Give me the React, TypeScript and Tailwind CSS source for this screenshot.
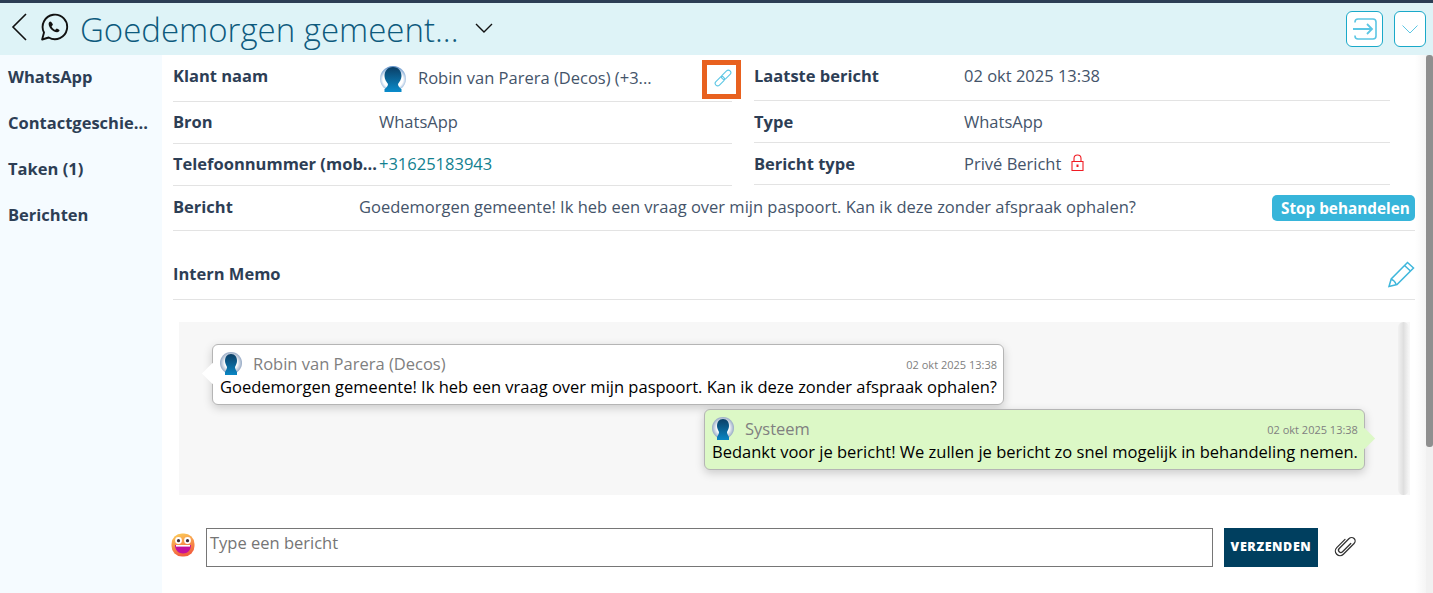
const sideItems = ["WhatsApp", "Contactgeschie...", "Taken (1)", "Berichten"];

function Avatar() {
  return (
    <svg width="26" height="28" viewBox="0 0 26 28" className="mt-[2px] shrink-0">
      <defs>
        <radialGradient id="halo" cx="50%" cy="62%" r="62%">
          <stop offset="62%" stopColor="#ffffff" />
          <stop offset="100%" stopColor="#4f86c4" />
        </radialGradient>
        <linearGradient id="head" x1="0" y1="0" x2="0" y2="1">
          <stop offset="0%" stopColor="#0b3f66" />
          <stop offset="100%" stopColor="#0a8ccc" />
        </linearGradient>
      </defs>
      <path d="M0 14a13 13 0 0 1 26 0c0 4-2 7-4 9H4c-2-2-4-5-4-9z" fill="url(#halo)" />
      <path
        d="M13 2c5.500 0 8.500 4 8.500 9 0 3-2 6-3.500 8 0 2 1 3 3.500 5v3h-17v-3c2.500-2 3.500-3 3.500-5-1.500-2-3.500-5-3.500-8 0-5 3-9 8.500-9z"
        fill="url(#head)"
      />
    </svg>
  );
}

function SmallAvatar() {
  return (
    <svg width="22" height="24" viewBox="0 0 22 24" className="shrink-0">
      <defs>
        <radialGradient id="halo2" cx="50%" cy="50%" r="55%">
          <stop offset="50%" stopColor="#ffffff" />
          <stop offset="100%" stopColor="#7f97b8" />
        </radialGradient>
        <linearGradient id="head2" x1="0" y1="0" x2="0" y2="1">
          <stop offset="0%" stopColor="#0b3f66" />
          <stop offset="100%" stopColor="#0a86c4" />
        </linearGradient>
      </defs>
      <circle cx="11" cy="11" r="11" fill="url(#halo2)" />
      <path d="M11 2c4 0 6 3 6 7 0 2-1 4-2 6 0 2 1 3 2 5v3H5v-3c1-2 2-3 2-5-1-2-2-4-2-6 0-4 2-7 6-7z" fill="url(#head2)" />
    </svg>
  );
}

function Label({ children, className = "" }: { children: React.ReactNode; className?: string }) {
  return <div className={`text-[16.5px] font-bold text-[#2d3e55] ${className}`}>{children}</div>;
}

function Bubble({
  name,
  time,
  text,
  green,
}: {
  name: string;
  time: string;
  text: string;
  green?: boolean;
}) {
  return (
    <div
      className={`relative rounded-[6px] border border-[#b5b5b5] pt-[7px] pr-[6px] pb-[6px] pl-[7px] shadow-[0_3px_10px_rgba(0,0,0,0.18)] ${
        green ? "bg-[#dcf8c6]" : "bg-white"
      }`}
    >
      <div
        className={`absolute top-[21px] h-[15px] w-[15px] rotate-45 ${
          green ? "right-[-8px] bg-[#dcf8c6]" : "left-[-8px] bg-white"
        }`}
      />
      <div className="relative flex h-[24px] items-center">
        <SmallAvatar />
        <span className="ml-[11px] text-[16.5px] text-[#808080]">{name}</span>
        <span className="mt-[2px] ml-auto text-[11px] text-[#808080]">{time}</span>
      </div>
      <div className="relative text-[16.5px] leading-[22px] whitespace-nowrap text-black">{text}</div>
    </div>
  );
}

function Emoji() {
  return (
    <svg width="24" height="24" viewBox="0 0 24 24" className="shrink-0">
      <defs>
        <linearGradient id="face" x1="0" y1="0" x2="0.3" y2="1">
          <stop offset="0%" stopColor="#fdd25a" />
          <stop offset="100%" stopColor="#f2613f" />
        </linearGradient>
      </defs>
      <rect x="0.5" y="0.5" width="23" height="23" rx="10.5" fill="url(#face)" />
      <circle cx="7.5" cy="7.5" r="3.4" fill="#fff" />
      <circle cx="16.5" cy="7.5" r="3.4" fill="#fff" />
      <circle cx="7.5" cy="7.7" r="1.6" fill="#3a2a35" />
      <circle cx="16.5" cy="7.7" r="1.6" fill="#3a2a35" />
      <path d="M4 12h16c0 5-3.5 8.5-8 8.5S4 17 4 12z" fill="#c4119b" />
      <path d="M5 12h14v1.6H5z" fill="#fff" />
    </svg>
  );
}

export default function App() {
  return (
    <div
      className="h-[593px] w-[1433px] overflow-hidden bg-white"
      style={{ fontFamily: '"Open Sans", sans-serif' }}
    >
      <div className="h-[3px] bg-[#2c3e55]" />

      {/* Header */}
      <div className="flex h-[52px] items-center bg-[#def3f7] pr-[7px]">
        <svg width="16" height="28" viewBox="0 0 16 28" className="ml-[11px] -translate-y-[2px]" fill="none" stroke="#111" strokeWidth="1.6">
          <path d="M15 1L2 14l13 13" />
        </svg>
        <svg width="30" height="30" viewBox="0 0 24 24" className="ml-[12px] -translate-y-[2px]" fill="none" stroke="#111" strokeWidth="1.5">
          <path d="M2.5 22l1.5-5.6A9.8 9.8 0 1 1 7.8 20.4L2.5 22z" strokeLinejoin="round" />
          <path
            d="M9 7.6c-.6 0-1.3.7-1.3 2 0 2.8 3.6 6.6 6.7 6.6 1.3 0 2-.9 2-1.6 0-.4-1.9-1.4-2.2-1.4-.4 0-.8 1-1.2 1-.8 0-2.9-2-2.9-2.9 0-.4 1-.7 1-1.2 0-.3-1-2.5-2.1-2.5z"
            fill="#111"
            stroke="none"
          />
        </svg>
        <div className="ml-[11px] text-[33px] leading-none font-light whitespace-nowrap text-[#0d5a7d]">
          Goedemorgen gemeent...
        </div>
        <svg width="18" height="10" viewBox="0 0 18 10" className="ml-[16px] -translate-y-[1px]" fill="none" stroke="#111" strokeWidth="1.4">
          <path d="M1 1l8 8 8-8" />
        </svg>
        <div className="ml-auto flex items-center gap-[11px]">
          <button className="flex h-[36px] w-[37px] items-center justify-center rounded-[6px] border border-[#1aa9c9] bg-white">
            <svg width="26" height="24" viewBox="0 0 26 24" fill="none" stroke="#5cc6e4" strokeWidth="1.6">
              <path d="M3 5.5V5a3 3 0 0 1 3-3h15a3 3 0 0 1 3 3v14a3 3 0 0 1-3 3H6a3 3 0 0 1-3-3v-.5" />
              <path d="M1 12h19M15 7l5 5-5 5" strokeWidth="1.8" />
            </svg>
          </button>
          <button className="flex h-[36px] w-[32px] items-center justify-center rounded-[6px] border border-[#1aa9c9] bg-white">
            <svg width="16" height="9" viewBox="0 0 16 9" fill="none" stroke="#5cc6e4" strokeWidth="1">
              <path d="M.5.5L8 8 15.500.5" />
            </svg>
          </button>
        </div>
      </div>

      <div className="flex h-[538px]">
        {/* Sidebar */}
        <div className="w-[162px] shrink-0 bg-[#f5fbff] pl-[8px]">
          {sideItems.map((item) => (
            <div key={item} className="flex h-[45.7px] items-center text-[16.5px] font-bold whitespace-nowrap text-[#2d3e55]">
              {item}
            </div>
          ))}
        </div>

        {/* Content */}
        <div className="min-w-0 flex-1 pl-[11px]">
          <div className="flex">
            {/* Left column */}
            <div className="w-[559px]">
              <div className="flex h-[47px] items-center border-b border-[#e3e3e3]">
                <Label className="mb-[4px] w-[207px]">Klant naam</Label>
                <Avatar />
                <span className="ml-[12px] text-[16.5px] whitespace-nowrap text-[#44546a]">Robin van Parera (Decos) (+3...</span>
                <div className="mt-[3px] mr-[-9px] ml-auto flex h-[39px] w-[39px] items-center justify-center border-[5px] border-[#e8611f] bg-white">
                  <svg width="18" height="18" viewBox="0 0 18 18" className="translate-x-[1px] -translate-y-[2px]" fill="none" stroke="#5cc6e4" strokeWidth="1.1">
                    <g transform="rotate(-45 9 9)">
                      <rect x="-1" y="6.500" width="11" height="5" rx="2.500" />
                      <rect x="8" y="6.500" width="11" height="5" rx="2.500" />
                    </g>
                  </svg>
                </div>
              </div>
              <div className="flex h-[42px] items-center border-b border-[#e3e3e3]">
                <Label className="mb-[1px] w-[206px]">Bron</Label>
                <span className="mb-[1px] text-[16.5px] text-[#44546a]">WhatsApp</span>
              </div>
              <div className="flex h-[42px] items-center border-b border-[#e3e3e3]">
                <Label className="mb-[1px] w-[206px] whitespace-nowrap">Telefoonnummer (mob...</Label>
                <span className="mb-[1px] text-[16.5px] text-[#11808f]">+31625183943</span>
              </div>
            </div>

            {/* Right column */}
            <div className="ml-[22px] w-[636px]">
              <div className="flex h-[46px] items-center border-b border-[#e3e3e3]">
                <Label className="mb-[3px] w-[210px]">Laatste bericht</Label>
                <span className="mb-[3px] text-[16.5px] text-[#44546a]">02 okt 2025 13:38</span>
              </div>
              <div className="flex h-[42px] items-center border-b border-[#e3e3e3]">
                <Label className="mt-[2px] w-[210px]">Type</Label>
                <span className="mt-[2px] text-[16.5px] text-[#44546a]">WhatsApp</span>
              </div>
              <div className="flex h-[42px] items-center border-b border-[#e3e3e3]">
                <Label className="mt-[2px] w-[210px]">Bericht type</Label>
                <span className="mt-[2px] text-[16.5px] text-[#44546a]">Privé Bericht</span>
                <svg width="13" height="17" viewBox="0 0 13 17" className="ml-[10px] -translate-y-[1px]" fill="none" stroke="#f01c24" strokeWidth="1.1">
                  <path d="M1 7.500h11v9H1zM3 7.500V4.500a3.500 3.500 0 0 1 7 0v3" />
                  <path d="M6.500 10.500V13" strokeWidth="2" />
                </svg>
              </div>
            </div>
          </div>

          {/* Bericht row */}
          <div className="flex h-[45px] items-center border-b border-[#e3e3e3]">
            <Label className="mb-[2px] w-[186px]">Bericht</Label>
            <span className="mb-[2px] text-[16.5px] whitespace-nowrap text-[#44546a]">
              Goedemorgen gemeente! Ik heb een vraag over mijn paspoort. Kan ik deze zonder afspraak ophalen?
            </span>
            <button className="ml-auto h-[26px] w-[143px] rounded-[5px] bg-[#37b5da] pl-[9px] text-left text-[15.300px] font-bold whitespace-nowrap text-white">
              Stop behandelen
            </button>
          </div>

          {/* Intern memo */}
          <div className="flex h-[69px] items-center justify-between border-b border-[#e3e3e3] pt-[18px]">
            <Label>Intern Memo</Label>
            <svg width="28" height="28" viewBox="0 0 28 28" fill="none" stroke="#3fb7dc" strokeWidth="1.5">
              <path d="M2 26.500l2.200-7.500L20.500 2.500 26.500 8 10 24.500z" strokeLinejoin="miter" />
              <path d="M4.200 19.500c2 .3 4 2.500 5 5M17.500 5.500l6 5.500" />
            </svg>
          </div>

          {/* Chat */}
          <div className="relative mt-[22px] ml-[6px] h-[173px] w-[1231px] bg-[#f7f7f7] pt-[22px]">
            <div className="absolute top-0 right-[1px] bottom-0 w-[11px] rounded-full bg-gradient-to-r from-[#f2f2f2] via-[#dfdfdf] to-[#f6f6f6]" />
            <div className="ml-[33px] w-fit">
              <Bubble
                name="Robin van Parera (Decos)"
                time="02 okt 2025 13:38"
                text="Goedemorgen gemeente! Ik heb een vraag over mijn paspoort. Kan ik deze zonder afspraak ophalen?"
              />
            </div>
            <div className="mt-[4px] ml-[525px] w-fit">
              <Bubble
                green
                name="Systeem"
                time="02 okt 2025 13:38"
                text="Bedankt voor je bericht! We zullen je bericht zo snel mogelijk in behandeling nemen."
              />
            </div>
          </div>

          {/* Input */}
          <div className="mt-[33px] flex h-[39px] items-center">
            <div className="-ml-[2px] flex w-[24px] -translate-y-[3px] justify-center">
              <Emoji />
            </div>
            <div className="ml-[11px] h-[39px] w-[1007px] border border-[#767676] px-[3px] text-[16.5px] leading-[28px] text-[#757575]">
              Type een bericht
            </div>
            <button className="ml-[11px] h-[39px] w-[94px] bg-[#003f5f] text-[12.500px] font-extrabold tracking-[0.6px] text-white">
              VERZENDEN
            </button>
            <svg width="28" height="28" viewBox="0 0 24 24" className="ml-[13px] -translate-y-[2px] rotate-45" fill="none" stroke="#333" strokeWidth="1.100" strokeLinecap="round">
              <path d="M14 7v10a2 2 0 0 1-4 0V5a3 3 0 0 1 6 0v13a4 4 0 0 1-8 0V8" />
            </svg>
          </div>
        </div>

        {/* Page scrollbar */}
        <div className="flex w-[18px] shrink-0 bg-gradient-to-r from-white to-[#efefef]">
          <div className="ml-[11px] w-[7px] bg-[#f1f1f1]">
            <div className="h-[392px] rounded-t-[3px] rounded-b-[3px] bg-[#8f8f8f]" />
          </div>
        </div>
      </div>
    </div>
  );
}
